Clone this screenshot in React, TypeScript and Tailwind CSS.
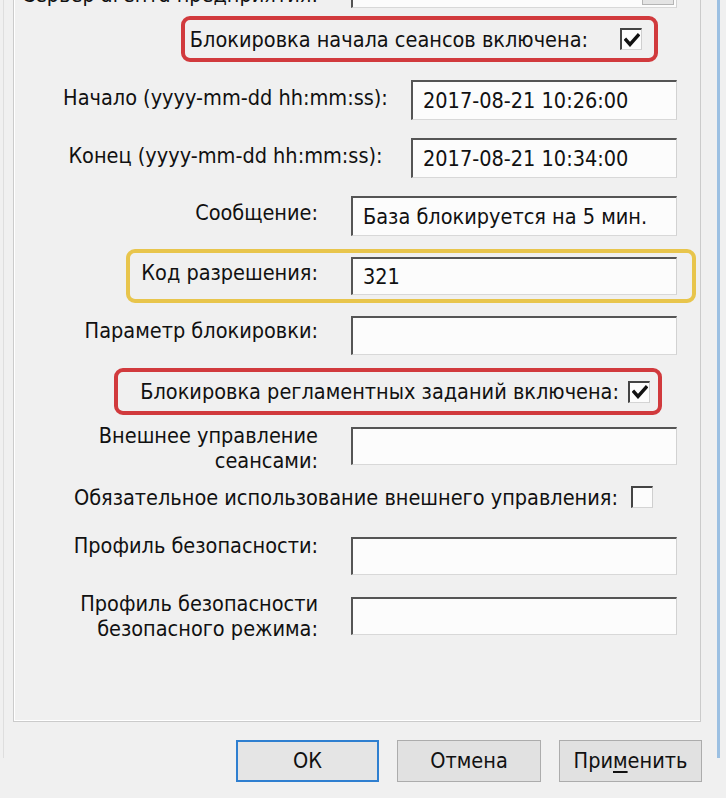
import React from "react";

const FONT = { fontFamily: '"DejaVu Sans Condensed", "DejaVu Sans", "Liberation Sans", sans-serif', fontStretch: "condensed" as const };

function Field({ w, value, h = "h-[39px]", button = false }: { w: string; value?: string; h?: string; button?: boolean }) {
  return (
    <div className={`${w} ${h} shrink-0 bg-[#fcfcfc] border-t-2 border-l-2 border-t-[#555555] border-l-[#555555] border-r border-b border-r-[#d2d2d2] border-b-[#d8d8d8] flex items-center pl-[10px] relative`}>
      <span className="text-[21.5px] leading-[25px] text-[#111] whitespace-nowrap">{value}</span>
      {button && <div className="absolute right-[2px] top-[2px] bottom-[2px] w-[32px] bg-[#e4e4e4] border border-[#b5b5b5]" />}
    </div>
  );
}

function Check({ checked }: { checked: boolean }) {
  return (
    <div className="w-[22px] h-[22px] shrink-0 bg-[#fcfcfc] border-t-2 border-l-2 border-t-[#444444] border-l-[#444444] border-r border-b border-r-[#cfcfcf] border-b-[#d4d4d4] flex items-center justify-center">
      {checked && (
        <svg width="16" height="14" viewBox="0 0 16 14">
          <path d="M2 7 L6 11.5 L14 2.5" fill="none" stroke="#111" strokeWidth="3.4" strokeLinecap="square" strokeLinejoin="miter" />
        </svg>
      )}
    </div>
  );
}

function Label({ children, className = "" }: { children: React.ReactNode; className?: string }) {
  return <div className={`text-[21.5px] leading-[25px] text-[#111] ${className}`}>{children}</div>;
}

export default function App() {
  return (
    <div className="w-[726px] h-[798px] bg-[#f0f0f0] overflow-hidden pl-[3px]" style={FONT}>
      <div className="w-[717px] h-[798px] border-l border-l-[#dedede] border-r-[3px] border-r-[#9cc0e2] bg-[#f0f0f0]">
        {/* group box */}
        <div className="ml-[9px] w-[688px] h-[762px] -mt-[40px] border-l border-r border-b border-[#cbcbcb] shadow-[inset_1px_-1px_0_#ffffff] pt-[9px]">
          {/* R0 partial */}
          <div className="flex items-start h-[39px]">
            <Label className="w-[304px] text-right pt-[13px] whitespace-nowrap">Сервер агента предприятия:</Label>
            <div className="w-[33px]" />
            <Field w="w-[326px]" button />
          </div>

          {/* R1 red box */}
          <div className="mt-[8px] ml-[167px] w-[477px] h-[46px] border-4 border-[#d13a3d] rounded-[9px] flex items-center justify-end pr-[12px] gap-[32px]">
            <Label className="whitespace-nowrap">Блокировка начала сеансов включена:</Label>
            <Check checked />
          </div>

          {/* R2 */}
          <div className="mt-[18px] flex items-start">
            <Label className="ml-[26px] w-[371px] text-center pt-[5px] whitespace-nowrap">Начало (yyyy-mm-dd hh:mm:ss):</Label>
            <Field w="w-[266px]" h="h-[40px]" value="2017-08-21 10:26:00" />
          </div>

          {/* R3 */}
          <div className="mt-[18px] flex items-start">
            <Label className="ml-[26px] w-[371px] text-center pt-[5px] whitespace-nowrap">Конец (yyyy-mm-dd hh:mm:ss):</Label>
            <Field w="w-[266px]" h="h-[40px]" value="2017-08-21 10:34:00" />
          </div>

          {/* R4 */}
          <div className="mt-[18px] flex items-start">
            <Label className="w-[304px] text-right pt-[4px]">Сообщение:</Label>
            <div className="w-[33px]" />
            <Field w="w-[326px]" h="h-[40px]" value="База блокируется на 5 мин." />
          </div>

          {/* R5 yellow */}
          <div className="mt-[13px] ml-[112px] w-[570px] h-[54px] border-4 border-[#e8c54c] rounded-[9px] flex items-start pt-[4px]">
            <Label className="w-[188px] text-right pt-[3px] whitespace-nowrap">Код разрешения:</Label>
            <div className="w-[33px]" />
            <Field w="w-[326px]" h="h-[38px]" value="321" />
          </div>

          {/* R6 */}
          <div className="mt-[13px] flex items-start">
            <Label className="w-[304px] text-right pt-[2px] whitespace-nowrap">Параметр блокировки:</Label>
            <div className="w-[33px]" />
            <Field w="w-[326px]" h="h-[39px]" />
          </div>

          {/* R7 red box */}
          <div className="mt-[13px] ml-[100px] w-[548px] h-[47px] border-4 border-[#d13a3d] rounded-[9px] flex items-center justify-end pr-[8px] gap-[9px]">
            <Label className="whitespace-nowrap">Блокировка регламентных заданий включена:</Label>
            <Check checked />
          </div>

          {/* R8 */}
          <div className="mt-[12px] flex items-start h-[38px]">
            <Label className="w-[304px] text-right -mt-[4px]">
              Внешнее управление
              <br />
              сеансами:
            </Label>
            <div className="w-[33px]" />
            <Field w="w-[326px]" h="h-[38px]" />
          </div>

          {/* R9 */}
          <div className="mt-[15px] h-[34px] flex items-center justify-end pr-[47px] gap-[13px]">
            <Label className="whitespace-nowrap">Обязательное использование внешнего управления:</Label>
            <Check checked={false} />
          </div>

          {/* R10 */}
          <div className="mt-[23px] flex items-start h-[38px]">
            <Label className="w-[304px] text-right -mt-[4px] whitespace-nowrap">Профиль безопасности:</Label>
            <div className="w-[33px]" />
            <Field w="w-[326px]" h="h-[38px]" />
          </div>

          {/* R11 */}
          <div className="mt-[22px] flex items-start h-[38px]">
            <Label className="w-[304px] text-right -mt-[6px]">
              Профиль безопасности
              <br />
              безопасного режима:
            </Label>
            <div className="w-[33px]" />
            <Field w="w-[326px]" h="h-[38px]" />
          </div>
        </div>

        {/* buttons */}
        <div className="mt-[18px] flex justify-end gap-[18px] pr-[15px]">
          <button className="w-[143px] h-[42px] bg-[#e5e5e5] border-2 border-[#2f7fd0] text-[21.5px] text-[#111]" style={FONT}>
            ОК
          </button>
          <button className="w-[144px] h-[42px] bg-[#e1e1e1] border border-[#acacac] text-[21.5px] text-[#111]" style={FONT}>
            Отмена
          </button>
          <button className="w-[143px] h-[42px] bg-[#e1e1e1] border border-[#acacac] text-[21.5px] text-[#111]" style={FONT}>
            При<span className="underline underline-offset-[3px]">м</span>енить
          </button>
        </div>
      </div>
    </div>
  );
}
